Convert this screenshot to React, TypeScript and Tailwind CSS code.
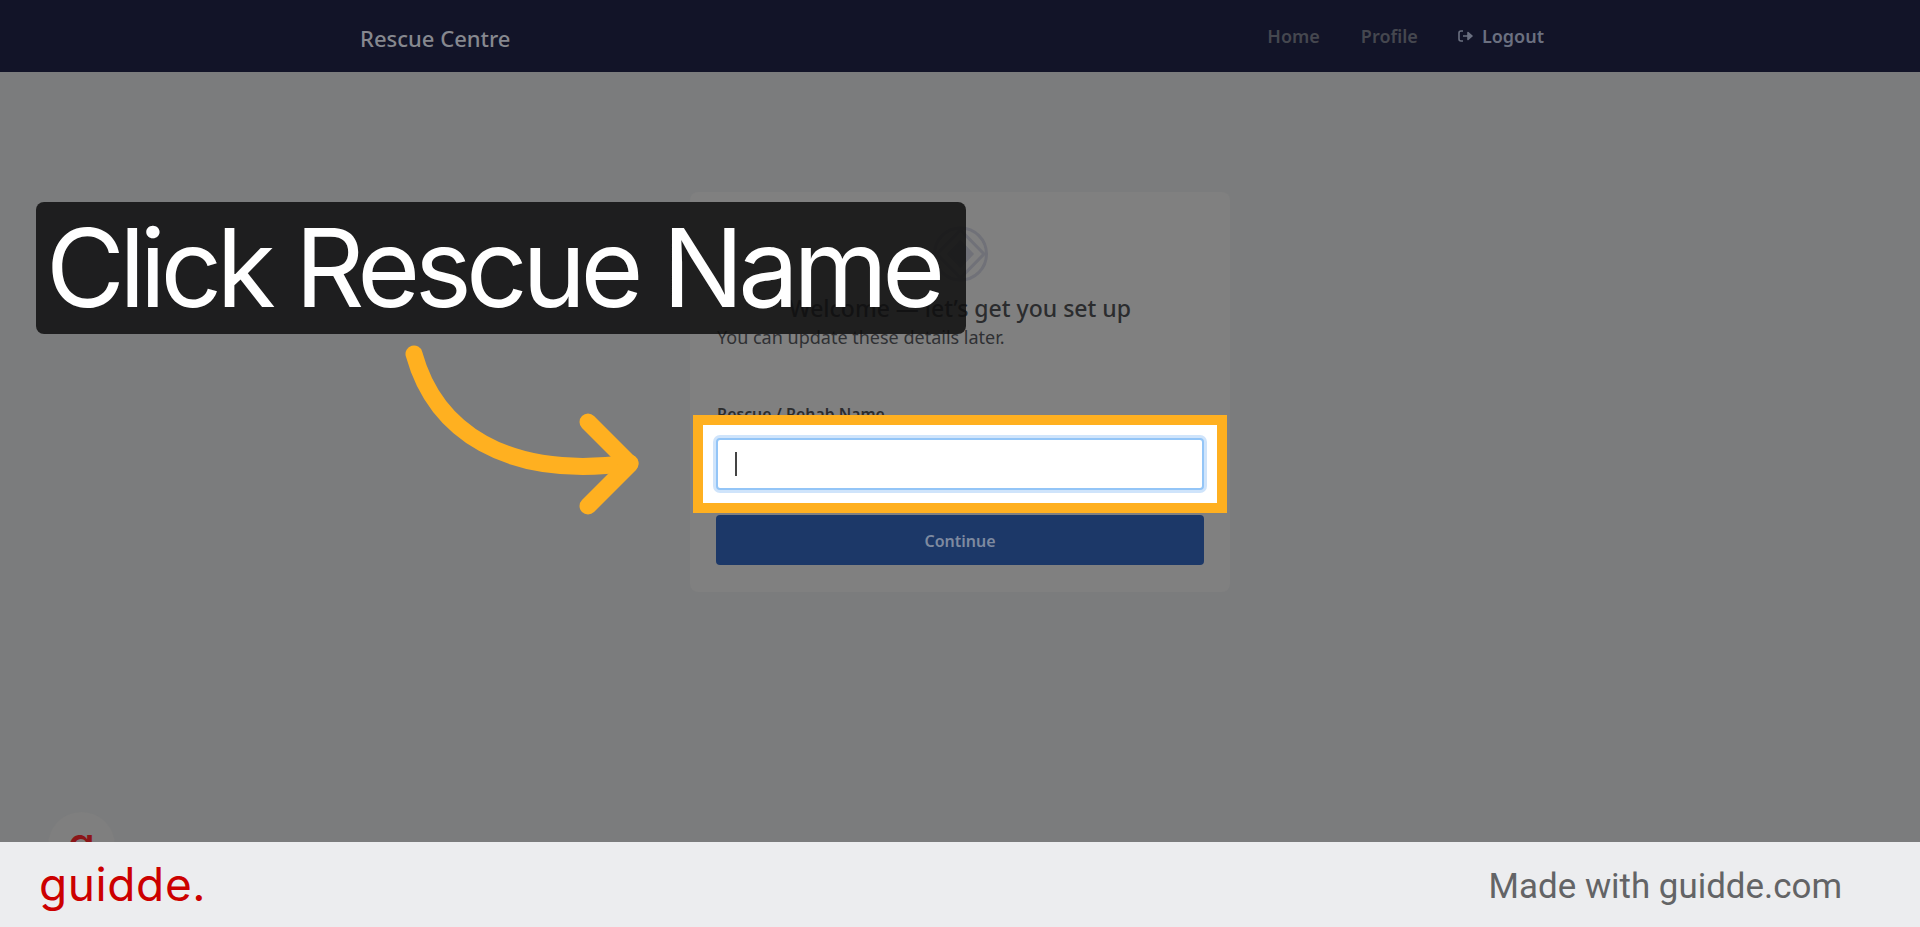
const noto = '"Noto Sans", sans-serif';

function Arrow() {
  return (
    <svg className="absolute left-[340px] top-[330px]" width="340" height="200" viewBox="0 0 340 200" fill="none" stroke="#ffb020" strokeWidth="17" strokeLinecap="round" strokeLinejoin="round">
      <path d="M74 24 C95 100 165 150 290 133" />
      <path d="M248 92 L290 134 L248 176" />
    </svg>
  );
}

export default function App() {
  return (
    <div className="relative flex h-[927px] flex-col overflow-hidden bg-[#7b7c7d]" style={{ fontFamily: noto }}>
      <header className="flex h-[72px] shrink-0 items-center justify-between bg-[#121428] pl-[360px] pr-[376px]">
        <span className="pt-[4px] text-[22px] font-medium text-[#86888f]">Rescue Centre</span>
        <nav className="flex items-center text-[18px] font-semibold">
          <span className="text-[#45474f]">Home</span>
          <span className="ml-[41px] text-[#45474f]">Profile</span>
          <span className="ml-[40px] flex items-center gap-[9px] text-[#6b7080]">
            <svg width="15" height="14" viewBox="0 0 15 14" fill="none" stroke="currentColor">
              <path d="M5 2H3Q1 2 1 4V10Q1 12 3 12H5" strokeWidth="1.6" />
              <path d="M5 7H10M10 3.5L14 7L10 10.5Z" fill="currentColor" strokeWidth="1.6" strokeLinejoin="round" />
            </svg>
            Logout
          </span>
        </nav>
      </header>
      <main className="relative min-h-0 flex-1">
        <div className="mx-auto mt-[120px] flex h-[400px] w-[540px] flex-col rounded-lg bg-[#808080] px-[27px] pt-[33px]">
          <svg className="mx-auto" width="59" height="58" viewBox="0 0 59 58" fill="none" stroke="#707178" strokeWidth="3">
            <circle cx="29.5" cy="29" r="26" />
            <path d="M29.5 5L53 29L29.5 53L6 29Z" />
            <path d="M29.5 17L41 29L29.5 41L18 29Z" fill="#707178" />
          </svg>
          <h1 className="mt-[8px] text-center text-[23px] font-medium leading-[34px] text-[#2b2c2e]">Welcome — let’s get you set up</h1>
          <p className="mt-[1px] text-[18px] leading-[22px] text-[#2f3033]">You can update these details later.</p>
          <label className="mt-[55px] h-[26px] overflow-hidden text-[15.8px] font-semibold leading-[22px] text-[#2b2c2e]">Rescue / Rehab Name</label>
        </div>
        <div className="absolute left-[693px] top-[343px] flex h-[98px] w-[534px] items-center justify-center border-[10px] border-[#ffb020] bg-white">
          <div className="flex h-[52px] w-[488px] items-center rounded-[4px] border-2 border-[#93c5f7] bg-white pl-[17px] shadow-[0_0_0_3px_#cfe4fb]">
            <span className="h-[24px] w-[2px] bg-[#444]" />
          </div>
        </div>
        <button className="absolute left-[716px] top-[443px] h-[50px] w-[488px] rounded-[4px] bg-[#1c3868] pt-[1px] text-[16px] font-semibold text-[#7e8aa0]">Continue</button>
        <div className="absolute left-[48px] top-[740px] h-[67px] w-[67px] rounded-full bg-[#7f7f7f] text-center text-[44px] font-medium leading-[62px] text-[#8b1518]" style={{ fontFamily: 'Inter, sans-serif' }}>g</div>
      </main>
      <footer className="z-10 flex h-[85px] shrink-0 items-center justify-between bg-[#ecedef] pl-[39px] pr-[78px]">
        <span className="text-[46px] tracking-[0.6px] text-[#cc0000]" style={{ fontFamily: 'Inter, sans-serif' }}>guidde.</span>
        <span className="pt-[5px] text-[34.9px] text-[#636466]" style={{ fontFamily: 'Roboto, sans-serif' }}>Made with guidde.com</span>
      </footer>
      <div className="absolute left-[36px] top-[202px] flex h-[132px] w-[930px] items-center whitespace-nowrap rounded-lg bg-[#0e0e0e]/85 pl-[10px] text-[108px] leading-none tracking-[-5.6px] text-white" style={{ fontFamily: 'Inter, sans-serif' }}>Click Rescue Name</div>
      <Arrow />
    </div>
  );
}
